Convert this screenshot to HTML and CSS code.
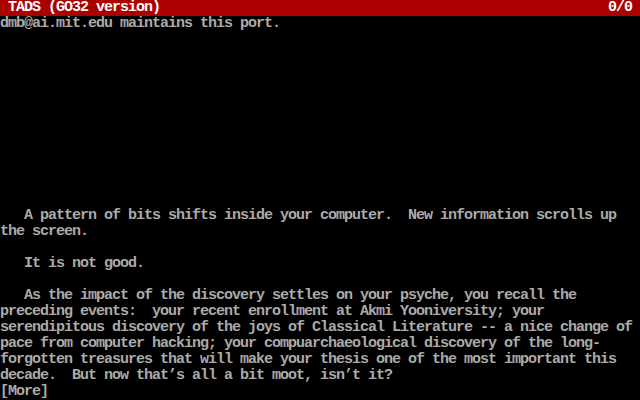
FILE: index.html
```
<!DOCTYPE html>
<html>
<head>
<meta charset="utf-8">
<link rel="stylesheet" href="styles.css">
</head>
<body>
<div class="screen">
  <div class="status"><span class="title">TADS (GO32 version)</span><span class="score">0/0</span></div>
  <div class="text">
    <div class="line">dmb@ai.mit.edu maintains this port.</div>
    <div class="line"></div>
    <div class="line"></div>
    <div class="line"></div>
    <div class="line"></div>
    <div class="line"></div>
    <div class="line"></div>
    <div class="line"></div>
    <div class="line"></div>
    <div class="line"></div>
    <div class="line"></div>
    <div class="line"></div>
    <div class="line">   A pattern of bits shifts inside your computer.  New information scrolls up</div>
    <div class="line">the screen.</div>
    <div class="line"></div>
    <div class="line">   It is not good.</div>
    <div class="line"></div>
    <div class="line">   As the impact of the discovery settles on your psyche, you recall the</div>
    <div class="line">preceding events:  your recent enrollment at Akmi Yooniversity; your</div>
    <div class="line">serendipitous discovery of the joys of Classical Literature -- a nice change of</div>
    <div class="line">pace from computer hacking; your compuarchaeological discovery of the long-</div>
    <div class="line">forgotten treasures that will make your thesis one of the most important this</div>
    <div class="line">decade.  But now that’s all a bit moot, isn’t it?</div>
    <div class="line">[More]</div>
  </div>
</div>
</body>
</html>
```
FILE: styles.css
```
html, body {
  margin: 0;
  padding: 0;
  background: #000000;
}
.screen {
  width: 640px;
  height: 400px;
  background: #000000;
  font-family: "Liberation Mono", "DejaVu Sans Mono", monospace;
  font-size: 15px;
  letter-spacing: -1px;
  font-weight: bold;
  line-height: 16px;
  overflow: hidden;
}
.status {
  height: 16px;
  background: #aa0000;
  color: #ffffff;
  display: flex;
  justify-content: space-between;
  padding: 0 8px;
  white-space: pre;
}
.text {
  color: #aaaaaa;
}
.line {
  height: 16px;
  white-space: pre;
}
```
